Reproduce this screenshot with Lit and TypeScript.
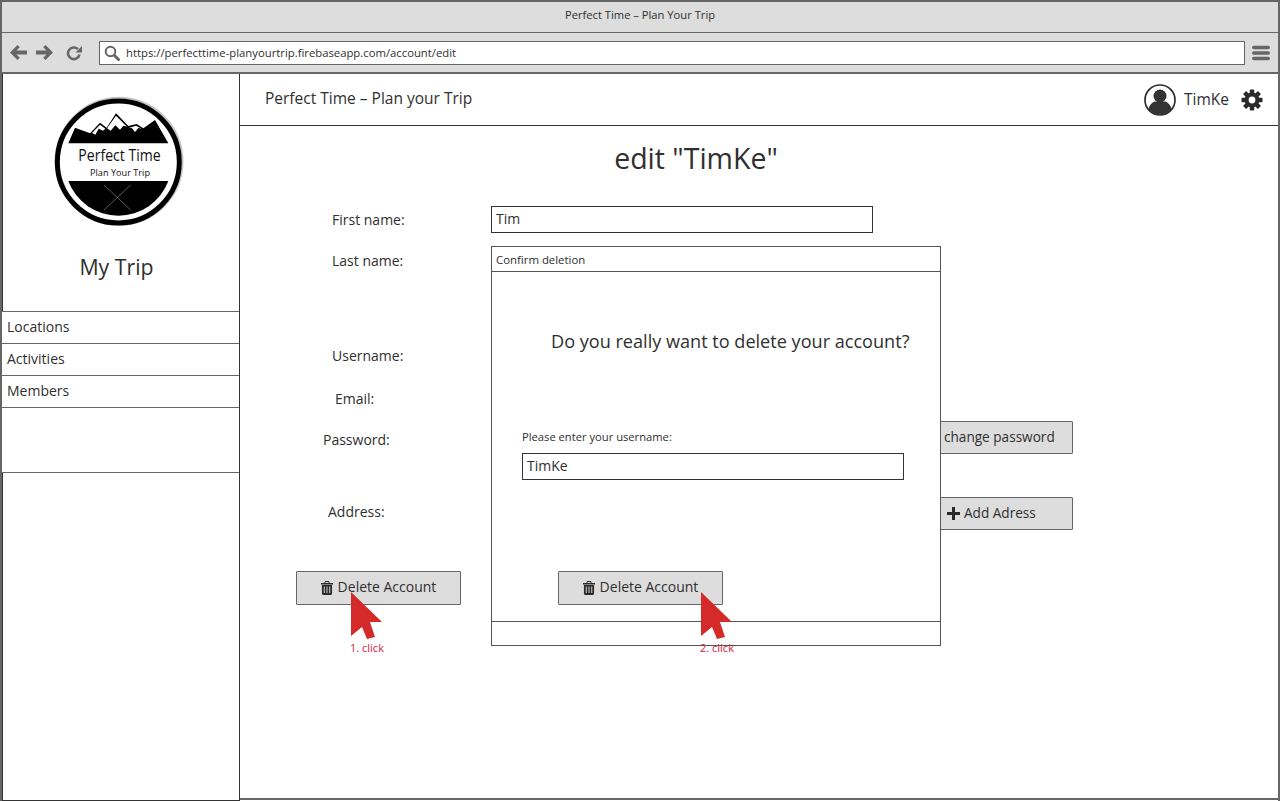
import { LitElement, html, css, svg } from 'lit';
import { customElement } from 'lit/decorators.js';

const TRASH = html`<svg class="ico" width="12" height="14" viewBox="0 0 13 15"><path fill="#2b2b2b" d="M4.500 0h4l1 2H13v1.600H0V2h3.500zM5 1 4.700 2h3.600L8 1zM1 4.300h11v9.200c0 .9-.6 1.500-1.400 1.500H2.400C1.600 15 1 14.400 1 13.500zM3 6v7h1V6zm3 0v7h1V6zm3 0v7h1V6z"/></svg>`;

const PLUS = html`<svg class="ico" width="13" height="13" viewBox="0 0 13 13"><path fill="#2b2b2b" d="M5 0h3v5h5v3H8v5H5V8H0V5h5z"/></svg>`;

const GEAR = svg`<g fill="#2b2b2b" transform="translate(11 11)">
  ${[0, 45, 90, 135, 180, 225, 270, 315].map(
    (a) => svg`<rect x="-2.200" y="-10.500" width="4.400" height="5" rx=".8" transform="rotate(${a})"/>`
  )}
  <circle r="5.400" fill="none" stroke="#2b2b2b" stroke-width="4"/>
</g>`;

interface FormRow {
  label: string;
  indent: number;
  offset: number;
}

const ROWS: FormRow[] = [
  { label: 'First name:', indent: 92, offset: 4 },
  { label: 'Last name:', indent: 92, offset: 4 },
  { label: 'Username:', indent: 92, offset: 4 },
  { label: 'Email:', indent: 95, offset: 4 },
  { label: 'Password:', indent: 83, offset: 9 },
  { label: 'Address:', indent: 88, offset: 5 },
];

@customElement('app-root')
export class AppRoot extends LitElement {
  static override styles = css`
    :host {
      display: block;
      width: 1280px;
      height: 801px;
      overflow: hidden;
      font-family: 'Open Sans', 'Noto Sans', sans-serif;
      color: #2f2f2f;
      background: #fff;
    }

    .window {
      box-sizing: border-box;
      height: 801px;
      display: flex;
      flex-direction: column;
      border-left: 2px solid #666;
      border-top: 2px solid #666;
      border-right: 2px solid #666;
    }

    .titlebar {
      height: 30px;
      flex: none;
      background: #ddd;
      border-bottom: 1px solid #666;
      text-align: center;
      font-size: 11.200px;
      line-height: 25px;
    }

    .toolbar {
      height: 41px;
      flex: none;
      box-sizing: border-box;
      background: #ddd;
      border-bottom: 2px solid #666;
      display: flex;
      align-items: center;
      padding: 0 8px;
    }

    .nav {
      display: flex;
      align-items: center;
      gap: 9px;
      width: 89px;
      flex: none;
    }

    .url {
      box-sizing: border-box;
      width: 1146px;
      height: 24px;
      flex: none;
      display: flex;
      align-items: center;
      gap: 6px;
      padding: 0 5px 0 4px;
      background: #fff;
      border: 1px solid #666;
      font-size: 11.300px;
    }

    .menu {
      margin-left: 7px;
    }

    .page {
      flex: 1;
      display: flex;
      min-height: 0;
    }

    .sidebar {
      box-sizing: border-box;
      width: 238px;
      flex: none;
      display: flex;
      flex-direction: column;
      border-left: 1px solid #333;
      border-right: 1px solid #333;
      border-bottom: 1px solid #333;
    }

    .logo {
      display: block;
      margin: 21px 0 0 49px;
    }

    .trip {
      margin: 12px 0 16px;
      padding-right: 9px;
      height: 54px;
      text-align: center;
      font-size: 21.300px;
      line-height: 52px;
      font-weight: 400;
    }

    .side-item {
      box-sizing: border-box;
      height: 32px;
      margin-left: -1px;
      padding-left: 5px;
      background: #fff;
      border-top: 1px solid #666;
      font-size: 14px;
      line-height: 30px;
    }

    .side-spacer {
      box-sizing: border-box;
      height: 66px;
      margin-left: -1px;
      background: #fff;
      border-top: 1px solid #666;
      border-bottom: 1px solid #666;
    }

    .main {
      flex: 1;
      position: relative;
      margin-bottom: 1px;
      border-bottom: 2px solid #666;
    }

    .header {
      box-sizing: border-box;
      height: 52px;
      display: flex;
      align-items: center;
      padding: 0 15px 0 25px;
      border-bottom: 1px solid #333;
      font-size: 15.500px;
    }

    .brand {
      flex: 1;
      padding-bottom: 4px;
    }

    .user-name {
      margin: 0 12px 0 8px;
      padding-bottom: 2px;
      font-size: 15.500px;
    }

    .heading {
      width: 912px;
      margin: 12px 0 28px;
      text-align: center;
      font-size: 28.500px;
      line-height: 40px;
      font-weight: 400;
    }

    .form {
      display: grid;
      grid-template-columns: 251px 445px 137px;
      grid-template-rows: 41px 95px 43px 36px 76px 74px;
      font-size: 14px;
    }

    .form-label {
      grid-column: 1;
      line-height: 20px;
    }

    .form-field {
      grid-column: 2;
    }

    .form-action {
      grid-column: 3;
    }

    .field {
      box-sizing: border-box;
      width: 382px;
      height: 27px;
      padding: 0 4px;
      border: 1px solid #333;
      background: #fff;
      font-size: 14px;
      line-height: 24px;
    }

    .btn {
      box-sizing: border-box;
      height: 33px;
      display: flex;
      align-items: center;
      background: #ddd;
      border: 1px solid #666;
      border-radius: 1px;
      font-size: 13.600px;
      white-space: nowrap;
    }

    .btn span {
      padding-bottom: 2px;
    }

    .ico {
      flex: none;
    }

    .btn-side {
      padding-left: 7px;
      gap: 4px;
    }

    .btn-side .ico {
      margin-left: 3px;
    }

    .btn-delete {
      width: 165px;
      height: 34px;
      justify-content: center;
      gap: 5px;
      font-size: 14px;
    }

    .btn-delete span {
      padding-bottom: 4px;
    }

    .delete-row {
      grid-column: 1 / -1;
      padding-left: 56px;
    }

    .dialog {
      box-sizing: border-box;
      position: absolute;
      left: 251px;
      top: 172px;
      width: 450px;
      height: 400px;
      display: flex;
      flex-direction: column;
      background: #fff;
      border: 1px solid #555;
    }

    .dialog-title {
      box-sizing: border-box;
      height: 25px;
      flex: none;
      padding-left: 4px;
      border-bottom: 1px solid #555;
      font-size: 11.400px;
      line-height: 25px;
    }

    .dialog-body {
      flex: 1;
      box-sizing: border-box;
      padding: 56px 0 0 30px;
      border-bottom: 1px solid #555;
    }

    .question {
      margin: 0 0 0 29px;
      font-size: 18.100px;
      line-height: 26px;
      font-weight: 400;
    }

    .prompt {
      margin-top: 74px;
      margin-bottom: 7px;
      font-size: 11.200px;
      line-height: 18px;
    }

    .dialog-body .btn-delete {
      margin: 91px 0 0 36px;
    }

    .dialog-foot {
      height: 23px;
      flex: none;
    }

    .pointer {
      position: absolute;
      top: 518px;
    }

    .click-note {
      position: absolute;
      top: 566px;
      font-size: 11px;
      line-height: 16px;
      color: #d8203a;
    }
  `;

  private renderDelete() {
    return html`<div class="btn btn-delete">${TRASH}<span>Delete Account</span></div>`;
  }

  private renderPointer(left: number) {
    return html`
      <svg class="pointer" style="left:${left}px" width="32" height="48" viewBox="0 0 32 48">
        <path fill="#d42a2a" d="M0 0 31 30 19 30 24 45 16 47 11 35 0 44z" />
      </svg>
    `;
  }

  private renderAction(label: string, row: number) {
    if (label === 'First name:') {
      return html`<div class="form-field" style="grid-row:${row}"><div class="field">Tim</div></div>`;
    }
    if (label === 'Password:') {
      return html`<div class="form-action" style="grid-row:${row}"><div class="btn btn-side"><span>change password</span></div></div>`;
    }
    if (label === 'Address:') {
      return html`<div class="form-action" style="grid-row:${row}"><div class="btn btn-side">${PLUS}<span>Add Adress</span></div></div>`;
    }
    return '';
  }

  protected override render() {
    return html`
      <div class="window">
        <div class="titlebar">Perfect Time – Plan Your Trip</div>
        <div class="toolbar">
          <div class="nav">
            <svg width="17" height="15" viewBox="0 0 17 15"><path fill="#666" d="M7.500 0 9.800 2.300 6.500 5.500H17v4H6.500l3.300 3.200L7.500 15 0 7.500z" /></svg>
            <svg width="17" height="15" viewBox="0 0 17 15"><path fill="#666" d="M9.500 0 7.200 2.300l3.300 3.200H0v4h10.500l-3.300 3.200L9.500 15 17 7.500z" /></svg>
            <svg style="margin-left:4px" width="16" height="16" viewBox="0 0 16 16"><path fill="none" stroke="#666" stroke-width="2.600" d="M13.500 9.500a5.800 5.800 0 1 1-1.600-5.300" /><path fill="#666" d="M16 1v6.500H9.500z" /></svg>
          </div>
          <div class="url">
            <svg width="16" height="16" viewBox="0 0 16 16"><circle cx="6.500" cy="6.500" r="4.800" fill="none" stroke="#666" stroke-width="2" /><path stroke="#666" stroke-width="3" stroke-linecap="round" d="M10.500 10.500 14.500 14.500" /></svg>
            <span>https://perfecttime-planyourtrip.firebaseapp.com/account/edit</span>
          </div>
          <svg class="menu" width="18" height="16" viewBox="0 0 18 16"><path stroke="#666" stroke-width="3.400" stroke-linecap="round" d="M1.700 2.500h14.600M1.700 8h14.600M1.700 13.500h14.600" /></svg>
        </div>
        <div class="page">
          <aside class="sidebar">
            <svg class="logo" width="134" height="134" viewBox="36 30 402 402">
              <circle cx="237" cy="229" r="191" fill="none" stroke="#c4c4c4" stroke-width="5" />
              <circle cx="235" cy="231" r="183" fill="#fff" stroke="#000" stroke-width="15" />
              <path d="M85 175 105 128 150 145 180 113 200 128 228 85 265 123 290 117 310 130 345 105 385 175z" fill="#000" />
              <path d="M156 144 180 119 196 131 189 137 176 131 166 149zM201 130 228 92 261 125 250 122 240 134 226 121 212 137zM268 128 288 122 305 131 295 129 285 141 276 130z" fill="#fff" />
              <path d="M85 288H385A160 160 0 0 1 85 288Z" fill="#000" />
              <path d="M192 300 272 375M272 300 192 375" stroke="#8a8a8a" stroke-width="2" />
              <text x="115" y="228" font-family="Open Sans" font-size="50" textLength="247" lengthAdjust="spacingAndGlyphs" fill="#111">Perfect Time</text>
              <text x="150" y="272" font-family="Open Sans" font-size="28" textLength="180" lengthAdjust="spacingAndGlyphs" fill="#111">Plan Your Trip</text>
            </svg>
            <h2 class="trip">My Trip</h2>
            <div class="side-item">Locations</div>
            <div class="side-item">Activities</div>
            <div class="side-item">Members</div>
            <div class="side-spacer"></div>
          </aside>
          <main class="main">
            <div class="header">
              <span class="brand">Perfect Time – Plan your Trip</span>
              <svg width="32" height="32" viewBox="0 0 32 32">
                <circle cx="16" cy="16" r="15" fill="#fff" stroke="#2b2b2b" stroke-width="1.700" />
                <circle cx="16" cy="12" r="6.500" fill="#333" />
                <path d="M4.500 25c1-5 5-7.500 7-7.500h9c2 0 6 2.500 7 7.500-3 3.500-7 5.500-11.500 5.500S7.500 28.500 4.500 25z" fill="#333" />
              </svg>
              <span class="user-name">TimKe</span>
              <svg width="22" height="22" viewBox="0 0 22 22">${GEAR}</svg>
            </div>
            <h1 class="heading">edit "TimKe"</h1>
            <div class="form">
              ${ROWS.map(
                (row, i) => html`
                  <div class="form-label" style="grid-row:${i + 1};padding:${row.offset}px 0 0 ${row.indent}px">${row.label}</div>
                  ${this.renderAction(row.label, i + 1)}
                `
              )}
              <div class="delete-row">
                <div style="width:165px">${this.renderDelete()}</div>
              </div>
            </div>
            <div class="dialog">
              <div class="dialog-title">Confirm deletion</div>
              <div class="dialog-body">
                <h3 class="question">Do you really want to delete your account?</h3>
                <div class="prompt">Please enter your username:</div>
                <div class="field">TimKe</div>
                ${this.renderDelete()}
              </div>
              <div class="dialog-foot"></div>
            </div>
            ${this.renderPointer(111)} ${this.renderPointer(461)}
            <span class="click-note" style="left:110px">1. click</span>
            <span class="click-note" style="left:460px">2. click</span>
          </main>
        </div>
      </div>
    `;
  }
}
